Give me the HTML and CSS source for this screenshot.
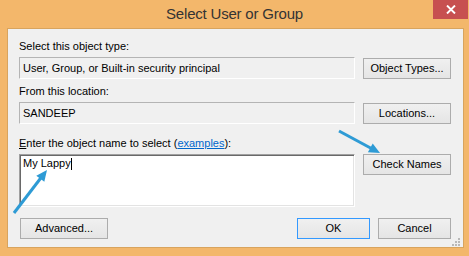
FILE: index.html
```html
<!DOCTYPE html>
<html>
<head>
<meta charset="utf-8">
<link rel="stylesheet" href="styles.css">
</head>
<body>
<div class="window">
  <div class="titlebar">
    <div class="title">Select User or Group</div>
    <div class="close">
      <svg width="10" height="9" viewBox="0 0 10 9"><path d="M1 0.5 L9 8.5 M9 0.5 L1 8.5" stroke="#fff" stroke-width="1.9" fill="none"/></svg>
    </div>
  </div>
  <div class="client">
    <div class="label">Select this object type:</div>
    <div class="row">
      <div class="field">User, Group, or Built-in security principal</div>
      <div class="btn btn-off">Object Types...</div>
    </div>
    <div class="label label-2">From this location:</div>
    <div class="row">
      <div class="field">SANDEEP</div>
      <div class="btn btn-off">Locations...</div>
    </div>
    <div class="label label-3"><span class="key">E</span>nter the object name to select (<span class="link">examples</span>):</div>
    <div class="row">
      <div class="names">My Lappy<span class="caret"></span></div>
      <div class="btn">Check Names</div>
    </div>
    <div class="footer">
      <div class="btn btn-adv">Advanced...</div>
      <div class="spacer"></div>
      <div class="btn btn-ok">OK</div>
      <div class="btn btn-small">Cancel</div>
    </div>
    <svg class="grip" width="8" height="8" viewBox="0 0 8 8">
      <rect x="6" y="0" width="2" height="2" fill="#b9b9b9"/>
      <rect x="3" y="3" width="2" height="2" fill="#b9b9b9"/>
      <rect x="6" y="3" width="2" height="2" fill="#b9b9b9"/>
      <rect x="0" y="6" width="2" height="2" fill="#b9b9b9"/>
      <rect x="3" y="6" width="2" height="2" fill="#b9b9b9"/>
      <rect x="6" y="6" width="2" height="2" fill="#b9b9b9"/>
    </svg>
  </div>
  <svg class="arrows" width="469" height="256" viewBox="0 0 469 256">
    <line x1="339" y1="131" x2="371" y2="148.3" stroke="#2e9bd5" stroke-width="3"/>
    <polygon points="380,153 367.9,152.2 372.7,143.4" fill="#2e9bd5"/>
    <line x1="14" y1="213" x2="40.8" y2="178" stroke="#2e9bd5" stroke-width="3"/>
    <polygon points="47,170 44.3,181.8 36.3,175.7" fill="#2e9bd5"/>
  </svg>
</div>
</body>
</html>
```

FILE: styles.css
```css
* { box-sizing: border-box; }
html, body {
  margin: 0;
  padding: 0;
}
body {
  width: 469px;
  height: 256px;
  overflow: hidden;
  background: #f3b76b;
  font-family: "Liberation Sans", Arial, sans-serif;
}
.window {
  position: relative;
  width: 469px;
  height: 256px;
  background: #f3b76b;
}
.titlebar {
  height: 28px;
  display: grid;
  grid-template-columns: 1fr auto 1fr;
}
.title {
  grid-column: 2;
  padding-top: 5px;
  font-size: 15px;
  line-height: 18px;
  letter-spacing: -0.2px;
  color: #333333;
  white-space: nowrap;
}
.close {
  grid-column: 3;
  justify-self: end;
  width: 35px;
  height: 19px;
  margin-right: 1px;
  background: #c75050;
  display: flex;
  align-items: center;
  justify-content: center;
}
.client {
  position: relative;
  margin-left: 7px;
  width: 457px;
  height: 220px;
  background: #f0f0f0;
  border: 1px solid #d8a45e;
  padding: 10px 12px 0 11px;
  font-size: 11px;
  line-height: 15px;
  color: #000;
}
.label {
  height: 15px;
  margin-bottom: 3px;
  white-space: nowrap;
}
.label-2 { margin-top: 5px; }
.label-3 { margin-top: 12px; }
.key { text-decoration: underline; }
.link {
  color: #0066cc;
  text-decoration: underline;
}
.row {
  display: flex;
  gap: 8px;
  align-items: flex-start;
}
.field {
  width: 336px;
  height: 22px;
  border: 1px solid;
  border-color: #b4b4b4 #ffffff #ffffff #b4b4b4;
  background: #f0f0f0;
  padding-left: 3px;
  line-height: 20px;
  white-space: nowrap;
}
.names {
  width: 336px;
  height: 53px;
  background: #fff;
  border: 1px solid;
  border-color: #a0a0a0 #ffffff #ffffff #a0a0a0;
  box-shadow: inset 1px 1px 0 #696969, inset -1px -1px 0 #e3e3e3;
  padding: 1px 3px;
  line-height: 15px;
}
.caret {
  display: inline-block;
  width: 1px;
  height: 12px;
  background: #000;
  vertical-align: -3px;
}
.btn {
  width: 88px;
  height: 21px;
  border: 1px solid #acacac;
  background: linear-gradient(#f0f0f0, #e5e5e5);
  text-align: center;
  line-height: 19px;
  white-space: nowrap;
}
.btn-off { margin-top: 1px; }
.footer {
  display: flex;
  gap: 8px;
  margin-top: 11px;
}
.btn-adv { margin-left: 1px; width: 88px; }
.spacer { flex: 1; }
.btn-ok {
  width: 73px;
  border-color: #3399ff;
}
.btn-small { width: 73px; }
.grip {
  position: absolute;
  right: 3px;
  bottom: 1px;
}
.arrows {
  position: absolute;
  left: 0;
  top: 0;
  pointer-events: none;
}
```
